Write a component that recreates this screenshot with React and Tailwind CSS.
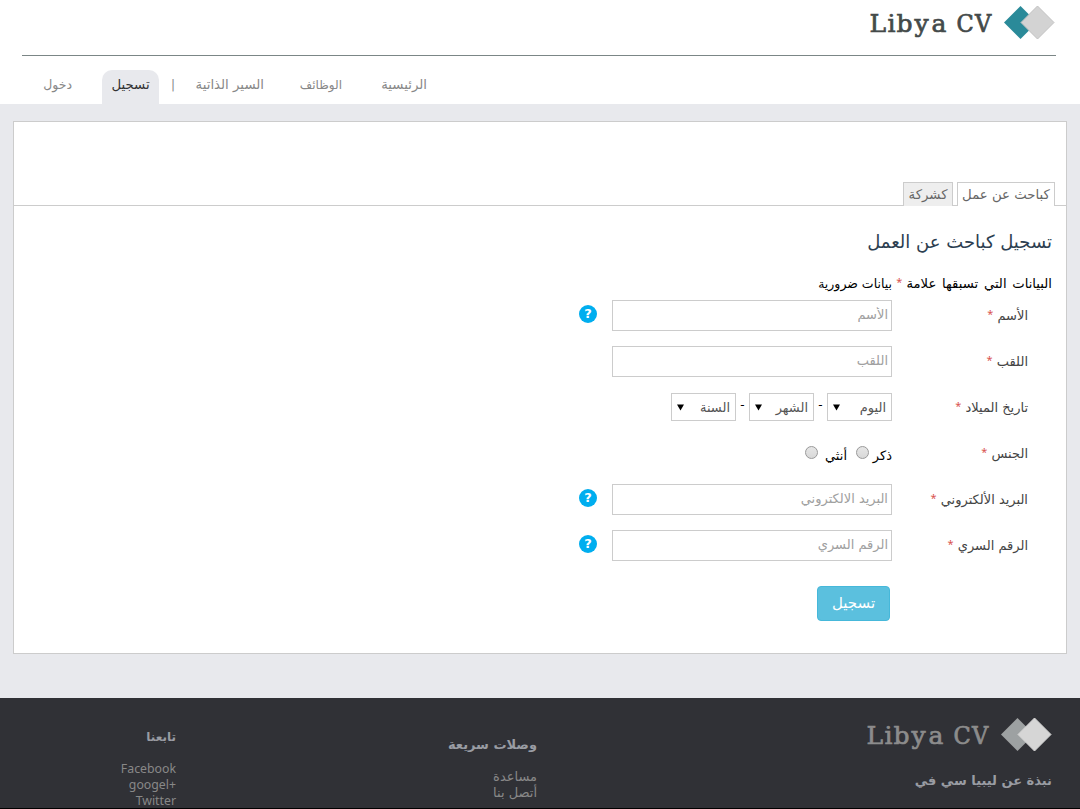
const FONT = "font-['DejaVu_Sans','Noto_Sans',sans-serif]";

function Logo({ ink, back, front, edge }) {
  return (
    <svg width="188" height="40" viewBox="0 0 188 40" direction="ltr">
      <g fill={ink} stroke={ink} strokeWidth="0.7" fontSize="25" style={{ direction: "ltr" }}>
        <text y="29" x="1.5 19.5 28.5 46.5 63.5" fontSize="25" fontFamily="'DejaVu Serif',serif">
          Libya
        </text>
        <text
          y="29"
          x="88.5 107"
          fontFamily="'DejaVu Serif Condensed','DejaVu Serif',serif"
          fontStretch="condensed"
        >
          CV
        </text>
      </g>
      <path d="M136 19.5 152.500 3 169 19.500 152.500 36Z" fill={back} />
      <path d="M153 19.500 169.500 3 186 19.500 169.500 36Z" fill={front} stroke={edge} strokeWidth="1" />
    </svg>
  );
}

function Help() {
  return (
    <span className="mr-[15px] flex h-[18px] w-[18px] items-center justify-center rounded-full bg-[#00aeef] text-[13px] leading-[18px] font-bold text-white">
      ?
    </span>
  );
}

function Star() {
  return (
    <span className="inline-block align-[2px] font-['Noto_Sans',sans-serif] text-[11px] leading-none text-[#d9534f]">*</span>
  );
}

function Label({ children }) {
  return (
    <div className="w-[136px] pt-[6px] text-[13px] leading-[20px] whitespace-nowrap text-[#444]">
      {children} <Star />
    </div>
  );
}

function Field({ label, placeholder, help }) {
  return (
    <div className="flex h-[46px] items-start">
      <Label>{label}</Label>
      <input
        placeholder={placeholder}
        className="h-[31px] w-[280px] border border-[#ccc] bg-white px-[3px] pb-[2px] text-[13px] text-[#555] outline-none placeholder:text-[#a0a0a0]"
      />
      {help && (
        <div className="pt-[5px]">
          <Help />
        </div>
      )}
    </div>
  );
}

function Select({ children }) {
  return (
    <div className="flex h-[28px] w-[65px] items-center justify-between border border-[#ccc] pt-px pr-[5px] pl-[5px] text-[13px] text-[#555]">
      <span className="whitespace-nowrap">{children}</span>
      <svg width="7" height="7" viewBox="0 0 7 7" className="-mt-px">
        <path d="M0 0.500H7L3.500 6.500Z" fill="#000" />
      </svg>
    </div>
  );
}

function Radio() {
  return <span className="h-[13px] w-[13px] rounded-full border border-[#999] bg-gradient-to-b from-[#e6e6e6] to-[#d8d8d8]" />;
}

export default function App() {
  return (
    <div dir="rtl" className={`flex h-[809px] w-[1080px] flex-col overflow-hidden bg-[#e8e9ed] text-[12px] ${FONT}`}>
      <header className="h-[104px] shrink-0 bg-white">
        <div className="mr-[24px] ml-[22px] flex h-[56px] items-start border-b border-[#7b8686] pt-[3px]">
          <Logo ink="#444a4a" back="#2a8a99" front="#d3d3d3" edge="#c2c2c2" />
        </div>
        <nav className="flex h-[48px] items-start pt-[14px] pr-[653px] text-[13.300px] leading-[30px] whitespace-nowrap text-[#888]">
          <a className="w-[85px]">الرئيسية</a>
          <a className="w-[78px] text-[12px]">الوظائف</a>
          <a className="w-[89px]">السير الذاتية</a>
          <span className="w-[16px] text-[12px]">|</span>
          <a className="h-[34px] w-[57px] rounded-t-[10px] bg-[#e8e9ed] text-center text-[#333]">تسجيل</a>
          <a className="mr-[30px] text-[12.500px]">دخول</a>
        </nav>
      </header>

      <main className="mx-[13px] mt-[17px] h-[533px] shrink-0 border border-[#ccc] bg-white">
        <div className="flex h-[84px] items-end gap-[4px] border-b border-[#ccc] pr-[11px] text-[13.300px] leading-[24px] whitespace-nowrap text-[#666]">
          <div className="-mb-px h-[24px] w-[98px] border border-b-0 border-[#ccc] bg-white text-center">كباحث عن عمل</div>
          <div className="-mb-px h-[24px] w-[50px] border border-b-0 border-[#ccc] bg-[#eee] text-center">كشركة</div>
        </div>
        <h1 className="mt-[22px] mr-[14px] h-[28px] text-[18px] leading-[28px] text-[#2c3e50]">تسجيل كباحث عن العمل</h1>
        <p className="mt-[18px] mr-[14px] h-[20px] text-[13.200px] leading-[20px] text-black">
          <span className="[word-spacing:1.500px]">البيانات التي تسبقها علامة</span> <Star />{" "}
          <span className="text-[12.500px]">بيانات ضرورية</span>
        </p>
        <form className="mt-[6px] mr-[38px]">
          <Field label="الأسم" placeholder="الأسم" help />
          <Field label="اللقب" placeholder="اللقب" />
          <div className="flex h-[46px] items-start">
            <Label>تاريخ الميلاد</Label>
            <div className="flex pt-px text-black">
              <Select>اليوم</Select>
              <span className="w-[13px] text-center leading-[24px]">-</span>
              <Select>الشهر</Select>
              <span className="w-[13px] text-center leading-[24px]">-</span>
              <Select>السنة</Select>
            </div>
          </div>
          <div className="flex h-[46px] items-start">
            <Label>الجنس</Label>
            <div className="flex pt-[8px] text-[13px] leading-[20px] text-black">
              <span className="w-[23px]">ذكر</span>
              <Radio />
              <span className="mr-[9px] w-[29px] whitespace-nowrap">أنثي</span>
              <Radio />
            </div>
          </div>
          <Field label="البريد الألكتروني" placeholder="البريد الالكتروني" help />
          <Field label="الرقم السري" placeholder="الرقم السري" help />
          <button
            type="button"
            className="mt-[10px] mr-[138px] block h-[35px] w-[73px] rounded-[4px] border border-[#46b8da] bg-[#5bc0de] text-[15px] text-white"
          >
            تسجيل
          </button>
        </form>
      </main>

      <footer className="mt-[44px] flex h-[111px] shrink-0 items-start border-b border-black bg-[#303136] whitespace-nowrap text-[#888]">
        <div className="mr-[28px] w-[515px] pt-[17px]">
          <div className="-mr-px">
            <Logo ink="#8c8c8c" back="#9da1a2" front="#d6d6d6" edge="#d6d6d6" />
          </div>
          <h2 className="mt-[16px] text-[13px] leading-[20px] font-bold text-[#999ca3]">نبذة عن ليبيا سي في</h2>
        </div>
        <div className="w-[361px] pt-[37px]">
          <h2 className="text-[13px] leading-[20px] font-bold text-[#999ca3]">وصلات سريعة</h2>
          <div className="mt-[14px] text-[13px] leading-[16px]">
            <div>مساعدة</div>
            <div>أتصل بنا</div>
          </div>
        </div>
        <div className="pt-[29px]">
          <h2 className="text-[12px] leading-[20px] font-bold text-[#999ca3]">تابعنا</h2>
          <div dir="ltr" className="mt-[14px] text-right font-['Noto_Sans',sans-serif] text-[12.300px] leading-[16px]">
            <div>Facebook</div>
            <div>googel+</div>
            <div>Twitter</div>
          </div>
        </div>
      </footer>
    </div>
  );
}
